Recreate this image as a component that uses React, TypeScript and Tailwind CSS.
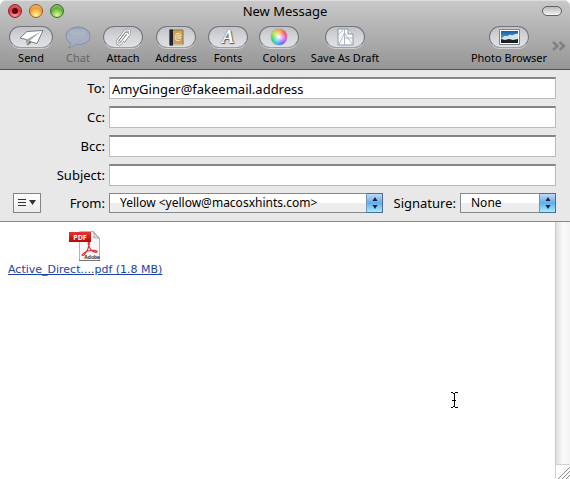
import type { ReactNode } from 'react';

interface ToolButtonProps {
    label: string;
    width: string;
    pill?: string;
    disabled?: boolean;
    children: ReactNode;
}

const PILL =
    'rounded-full border border-[#73767b] border-b-[#9b9ea2] bg-linear-to-b from-[#bfc2c7] via-[#d3d5d9] to-[#dfe1e4] shadow-[0_1px_0_#d0d0d0]';

function ToolButton({ label, width, pill = 'w-10', disabled = false, children }: ToolButtonProps) {
    return (
        <button type="button" disabled={disabled} className={`flex flex-col items-center ${width}`}>
            <span className={`flex h-[22px] items-center justify-center ${pill} ${disabled ? '' : PILL}`}>
                {children}
            </span>
            <span className={`mt-0.5 text-[11px] leading-4 whitespace-nowrap ${disabled ? 'text-[#666]' : 'text-black'}`}>
                {label}
            </span>
        </button>
    );
}

function TrafficLight({ label, color, dot = false }: { label: string; color: string; dot?: boolean }) {
    return (
        <button
            type="button"
            aria-label={label}
            className={`flex size-[14px] items-center justify-center rounded-full border ${color}`}
        >
            {dot && <span className="size-1.5 rounded-full bg-[#5e0509]" />}
        </button>
    );
}

function Field({ id, label, value }: { id: string; label: string; value?: string }) {
    return (
        <div className="flex items-center gap-1">
            <label htmlFor={id} className="w-[92px] text-right text-[13px] leading-5">
                {label}
            </label>
            <input
                id={id}
                type="text"
                defaultValue={value}
                className="h-[22px] min-w-0 flex-1 border border-t-2 border-[#bbb] border-t-[#858585] bg-white px-0.5 text-[13px] leading-4 outline-none"
            />
        </div>
    );
}

function Popup({ id, option, className }: { id: string; option: string; className: string }) {
    return (
        <div className={`relative ${className}`}>
            <select
                id={id}
                className="block h-5 w-full appearance-none border border-[#85888c] bg-linear-to-b from-white from-50% to-[#ededed] to-50% pr-5 pl-[10px] text-[12px] leading-4 outline-none"
            >
                <option>{option}</option>
            </select>
            <span className="pointer-events-none absolute inset-y-0 right-0 flex w-[17px] items-center justify-center border border-[#526b90] border-l-[#7294bd] bg-linear-to-b from-[#c0d9f5] via-[#62ade9] to-[#a2edff]">
                <svg viewBox="0 0 6 12" className="h-3 w-1.5 fill-[#172437]">
                    <path d="M3 0 5.500 4h-5zM3 12 .5 8h5z" />
                </svg>
            </span>
        </div>
    );
}

function PlaneIcon() {
    return (
        <svg viewBox="0 0 25 17" className="h-[17px] w-[25px]" strokeLinejoin="round">
            <path d="M24 1.500 8 2.500 1 9l6.500 1.500L8.500 16l4-3 5.500 1.500z" fill="#fff" stroke="#6d6d6d" strokeWidth=".9" />
            <path d="M7.500 10.500 22 2.500 11 11.500 8.500 16z" fill="#a9a9a9" />
            <path d="M8.500 16 11 11.500l1.500 1.500z" fill="#666" />
        </svg>
    );
}

function ChatIcon() {
    return (
        <svg viewBox="0 0 26 23" className="h-[23px] w-[26px]">
            <defs>
                <linearGradient id="chat" x1="0" y1="0" x2="0" y2="1">
                    <stop offset="0" stopColor="#929eb4" />
                    <stop offset=".45" stopColor="#a9b1c1" />
                    <stop offset="1" stopColor="#a1acc1" />
                </linearGradient>
            </defs>
            <path
                d="M13 1C6.200 1 1 5 1 10c0 3.300 2 5.800 5 7.200-.2 2-1.300 3.500-2.800 4.600 3-.1 5.400-1.300 7-3.500 8.500 1.200 14.800-2.500 14.800-8.300C25 5 19.800 1 13 1z"
                fill="url(#chat)"
                stroke="#8290aa"
            />
            <ellipse cx="13" cy="6" rx="9" ry="3.500" fill="#bbc2cf" opacity=".45" />
        </svg>
    );
}

const CLIP = 'M7.500 13.500 12.500 7c1.300-1.600 3-.3 1.800 1.300L8.200 16c-2.200 2.600-5.600.4-3.600-2.400L11.500 4.500c2.600-3.300 7-.6 4.700 2.800L11.500 14';

function ClipIcon() {
    return (
        <svg viewBox="0 0 20 20" className="size-5" fill="none" strokeLinecap="round" strokeLinejoin="round">
            <path d={CLIP} stroke="#707070" strokeWidth="2.200" />
            <path d={CLIP} stroke="#fff" strokeWidth="1.300" />
        </svg>
    );
}

function BookIcon() {
    return (
        <svg viewBox="0 0 15 17" className="h-[17px] w-[15px]">
            <path d="M1 1h13v15H1z" fill="#cfa058" stroke="#8f6f3d" />
            <path d="M.5.500H4v16H.5z" fill="#20242a" />
            <path d="M4 16h10" stroke="#f4f1e9" />
            <text x="9" y="11" textAnchor="middle" fontSize="8" fontFamily="Noto Sans" fill="#fff4da">
                @
            </text>
        </svg>
    );
}

function DraftIcon() {
    return (
        <svg viewBox="0 0 17 18" className="h-[18px] w-[17px]" strokeLinejoin="round">
            <path d="M1 1h10l5 5v11H1z" fill="#fff" stroke="#8d949e" />
            <path d="M11 1v5h5" fill="#e1e4e9" stroke="#8d949e" />
            <path d="M7.500 1v16M1 7l5-5M7.500 5 2 16.500M7.500 5l8 11.500M7.500 10H16" stroke="#a9b6c8" fill="none" />
        </svg>
    );
}

function PhotoIcon() {
    return (
        <svg viewBox="0 0 21 16" className="h-4 w-[21px]">
            <defs>
                <linearGradient id="sky" x1="0" y1="0" x2="0" y2="1">
                    <stop offset="0" stopColor="#125ea9" />
                    <stop offset="1" stopColor="#78c6ec" />
                </linearGradient>
            </defs>
            <path d="M.5.500h20v15H.5z" fill="#fff" stroke="#81858b" />
            <path d="M2 2h17v12H2z" fill="url(#sky)" />
            <path d="M2 10c2-1 3-4 5-3s3-2 5-1 4-2 7-1v6H2z" fill="#d6e5e8" />
            <path d="M2 10l4 1 4-1 4 1 5-1v4H2z" fill="#182023" />
        </svg>
    );
}

function PdfIcon() {
    return (
        <svg viewBox="0 0 32 32" className="size-8">
            <defs>
                <linearGradient id="pdf" x1="0" y1="0" x2="0" y2="1">
                    <stop offset="0" stopColor="#ea3430" />
                    <stop offset="1" stopColor="#ba0508" />
                </linearGradient>
            </defs>
            <path d="M10.500 1.500h14l6 7v22h-20z" fill="#f7f7f7" stroke="#b5b5b5" />
            <path d="M10 30.500h21" stroke="#777" />
            <path d="M24 1.500c1.500 2 1.500 4 .8 6.500 2-.6 4-.5 5.700.8z" fill="#ddd" stroke="#999" strokeWidth=".8" />
            <path
                d="M20 12c-1.500 0-.5 4 1 6.500 2 3.500 6.500 4.500 7 3.300.4-1.600-5.500-1.900-9-.8-3 1-6.500 3.200-5.700 4.400 1.200 1.300 4.200-3.400 5.500-6.400C20 16 21 12 20 12z"
                fill="none"
                stroke="#db3537"
                strokeWidth="1.200"
            />
            <path d="M0 2h22v10H0z" fill="url(#pdf)" />
            <text x="11" y="10" textAnchor="middle" fontSize="7" fontWeight="700" fontFamily="Open Sans" fill="#fff">
                PDF
            </text>
            <text x="23" y="28.500" textAnchor="middle" fontSize="5" fontWeight="700" fontFamily="Liberation Sans" fill="#222">
                Adobe
            </text>
        </svg>
    );
}

export default function App() {
    return (
        <div className="flex min-h-screen flex-col bg-white font-['Noto_Sans',sans-serif] text-black">
            <header className="rounded-t-md border-b border-[#515151] bg-linear-to-b from-[#c9c9c9] to-[#969696] pb-[3px] shadow-[inset_0_1px_0_#dedede]">
                <div className="grid h-[26px] grid-cols-[1fr_auto_1fr] items-center px-2 pb-1">
                    <div className="flex gap-[7px]">
                        <TrafficLight
                            label="Close"
                            dot
                            color="border-[#84272b] bg-[radial-gradient(circle_at_50%_85%,#ff9b9b,#de3a40_55%,#c9767b)]"
                        />
                        <TrafficLight
                            label="Minimize"
                            color="border-[#9a5d20] bg-[radial-gradient(circle_at_50%_85%,#fff79b,#ed9e35_60%,#e8bd8a)]"
                        />
                        <TrafficLight
                            label="Zoom"
                            color="border-[#3b6e28] bg-[radial-gradient(circle_at_50%_85%,#d8ff95,#62ae3e_60%,#a0c58e)]"
                        />
                    </div>
                    <h1 className="text-[13px] leading-5">New Message</h1>
                    <button
                        type="button"
                        aria-label="Toggle toolbar"
                        className="h-[10px] w-5 justify-self-end rounded-full border border-[#626262] bg-linear-to-b from-[#b9b9b9] to-[#f4f4f4]"
                    />
                </div>
                <div className="flex items-start pl-2">
                    <ToolButton label="Send" width="w-[46px]" pill="w-11">
                        <PlaneIcon />
                    </ToolButton>
                    <ToolButton label="Chat" width="w-12" disabled>
                        <ChatIcon />
                    </ToolButton>
                    <ToolButton label="Attach" width="w-[42px]">
                        <ClipIcon />
                    </ToolButton>
                    <ToolButton label="Address" width="w-16">
                        <BookIcon />
                    </ToolButton>
                    <ToolButton label="Fonts" width="w-10">
                        <span className="font-['Liberation_Serif',serif] text-[19px] leading-5 font-bold text-white italic [text-shadow:0_0_1px_#333,1px_1px_1px_#555]">
                            A
                        </span>
                    </ToolButton>
                    <ToolButton label="Colors" width="w-[62px]">
                        <span className="size-4 rounded-full bg-[radial-gradient(circle,#fff,transparent_65%),conic-gradient(#ff9c3c,#ff4b58,#e34ee8,#5865f5,#34bdf0,#38d95b,#b5e83c,#ff9c3c)] shadow-[0_0_1px_#555]" />
                    </ToolButton>
                    <ToolButton label="Save As Draft" width="w-[70px]">
                        <DraftIcon />
                    </ToolButton>
                    <div className="ml-auto flex">
                        <ToolButton label="Photo Browser" width="w-20">
                            <PhotoIcon />
                        </ToolButton>
                        <button type="button" aria-label="More tools" className="mt-3.5 flex h-3 w-[21px] items-center justify-end pr-1">
                            <svg viewBox="0 0 14 10" className="h-[10px] w-3.5 fill-none stroke-[#808080]" strokeWidth="2.500">
                                <path d="m1 1 4.500 4L1 9M7.500 1 12 5 7.500 9" />
                            </svg>
                        </button>
                    </div>
                </div>
            </header>

            <form className="flex flex-col gap-[7px] border-b border-[#85888c] bg-[#e8e8e8] pt-[7px] pr-3.5 pb-2 pl-[13px]">
                <Field id="to" label="To:" value="AmyGinger@fakeemail.address" />
                <Field id="cc" label="Cc:" />
                <Field id="bcc" label="Bcc:" />
                <Field id="subject" label="Subject:" />
                <div className="flex items-center">
                    <button
                        type="button"
                        aria-label="Header fields"
                        className="flex h-5 w-7 items-center justify-center border border-[#858585] bg-linear-to-b from-white to-[#ececec]"
                    >
                        <svg viewBox="0 0 18 8" className="h-2 w-[18px] fill-[#333]">
                            <path d="M0 0h8v1H0zM0 3h8v1H0zM0 6h8v1H0zM11 1h7l-3.500 5z" />
                        </svg>
                    </button>
                    <label htmlFor="from" className="mr-1 w-16 text-right text-[13px] leading-5">
                        From:
                    </label>
                    <Popup id="from" option="Yellow <yellow@macosxhints.com>" className="min-w-0 flex-1" />
                    <label htmlFor="signature" className="mr-1 w-[73px] text-right text-[13px] leading-5">
                        Signature:
                    </label>
                    <Popup id="signature" option="None" className="w-24" />
                </div>
            </form>

            <main className="flex flex-1">
                <div className="relative flex-1 px-2 pt-2">
                    <a
                        href="#attachment"
                        className="inline-flex flex-col items-center text-[11px] leading-4 text-[#1c43a5] underline"
                    >
                        <PdfIcon />
                        <span className="font-['DejaVu_Sans',sans-serif]">Active_Direct....pdf (1.8 MB)</span>
                    </a>
                    <svg
                        viewBox="0 0 8 16"
                        className="absolute top-[66%] left-[81%] h-4 w-2 fill-none stroke-black"
                        shapeRendering="crispEdges"
                    >
                        <path d="M.5.500h2l1.500 1 1.500-1h2M4 1v14M.5 15.500h2l1.500-1 1.500 1h2M2 8.500h4" />
                    </svg>
                </div>
                <div className="flex w-[15px] flex-col">
                    <div className="flex-1 border-l border-[#c8c8c8] bg-linear-to-r from-[#dedede] via-[#fafafa] to-[#f3f3f3]" />
                    <div className="h-[15px] border-t border-l border-[#d0d0d0] bg-white">
                        <svg viewBox="0 0 14 14" className="size-3.5 stroke-[#8a8a8a]">
                            <path d="M2 14 14 2M6 14l8-8M10 14l4-4" />
                        </svg>
                    </div>
                </div>
            </main>
        </div>
    );
}
